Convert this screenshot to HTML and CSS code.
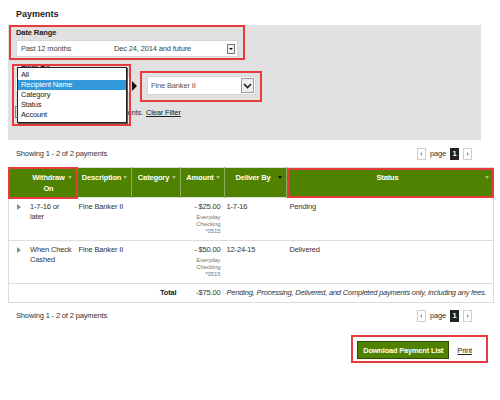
FILE: index.html
```html
<!DOCTYPE html>
<html>
<head>
<meta charset="utf-8">
<link rel="stylesheet" href="styles.css">
</head>
<body>
<div class="page">
  <h1 class="title">Payments</h1>
  <div class="panel">
    <div class="daterange mark">
      <div class="label">Date Range</div>
      <div class="select date-select">
        <span class="range">Past 12 months</span>
        <span class="range-text">Dec 24, 2014 and future</span>
        <span class="mini-btn"><i class="tri-down"></i></span>
      </div>
    </div>
    <div class="filter">
      <div class="filter-col">
        <div class="flabel">Filter By</div>
        <div class="select fsel">Recipient Name</div>
      </div>
      <span class="arrow"></span>
      <div class="mark valbox">
        <div class="select vsel">
          <span class="vtext">Fine Banker II</span>
          <span class="chev-btn"><svg width="9" height="6" viewBox="0 0 9 6"><polyline points="1,1 4.5,4.5 8,1" fill="none" stroke="#222" stroke-width="1.6"/></svg></span>
        </div>
      </div>
    </div>
    <div class="summary">
      <span class="focus-box"></span>
      <span class="count">Showing 2 of 2 payments.</span>
      <a class="link">Clear Filter</a>
    </div>
    <div class="list-mark">
      <ul class="listbox">
        <li>All</li>
        <li class="sel">Recipient Name</li>
        <li>Category</li>
        <li>Status</li>
        <li>Account</li>
      </ul>
    </div>
  </div>

  <div class="bar bar-top">
    <span>Showing 1 - 2 of 2 payments</span>
    <div class="pager">
      <span class="pg-btn"><i class="tri-l"></i></span>
      <span class="pg-word">page</span>
      <span class="pg-cur">1</span>
      <span class="pg-btn"><i class="tri-r"></i></span>
    </div>
  </div>

  <table class="pay">
    <colgroup>
      <col class="c1"><col class="c2"><col class="c3"><col class="c4"><col class="c5"><col class="c6">
    </colgroup>
    <thead>
      <tr class="head">
        <th class="th-withdraw"><div class="hd"><span class="lbl">Withdraw<br>On</span><i class="caret"></i></div></th>
        <th><div class="hd"><span class="lbl">Description</span><i class="caret"></i></div></th>
        <th><div class="hd"><span class="lbl">Category</span><i class="caret"></i></div></th>
        <th><div class="hd"><span class="lbl">Amount</span><i class="caret"></i></div></th>
        <th><div class="hd"><span class="lbl">Deliver By</span><i class="caret dark"></i></div></th>
        <th class="th-status"><div class="hd"><span class="lbl">Status</span><i class="caret"></i></div></th>
      </tr>
    </thead>
    <tbody>
      <tr>
        <td class="td-w"><div class="wcell"><i class="exp"></i><span class="wtext">1-7-16 or later</span></div></td>
        <td>Fine Banker II</td>
        <td></td>
        <td class="amt">- $25.00<div class="acct">Everyday<br>Checking<br>*0515</div></td>
        <td>1-7-16</td>
        <td class="st">Pending</td>
      </tr>
      <tr>
        <td class="td-w"><div class="wcell"><i class="exp"></i><span class="wtext">When Check Cashed</span></div></td>
        <td>Fine Banker II</td>
        <td></td>
        <td class="amt">- $50.00<div class="acct">Everyday<br>Checking<br>*0515</div></td>
        <td>12-24-15</td>
        <td class="st">Delivered</td>
      </tr>
      <tr class="total">
        <td></td>
        <td></td>
        <td class="tot-lbl">Total</td>
        <td class="amt">-$75.00</td>
        <td colspan="2" class="note">Pending, Processing, Delivered, and Completed payments only, including any fees.</td>
      </tr>
    </tbody>
  </table>

  <div class="bar bar-bottom">
    <span>Showing 1 - 2 of 2 payments</span>
    <div class="pager">
      <span class="pg-btn"><i class="tri-l"></i></span>
      <span class="pg-word">page</span>
      <span class="pg-cur">1</span>
      <span class="pg-btn"><i class="tri-r"></i></span>
    </div>
  </div>

  <div class="actions">
    <div class="mark actions-box">
      <button class="dl-btn">Download Payment List</button>
      <a class="link print">Print</a>
    </div>
  </div>
</div>
</body>
</html>
```

FILE: styles.css
```css
* { box-sizing: border-box; }
body {
  margin: 0;
  background: #fff;
  font-family: "Liberation Sans", Arial, sans-serif;
  font-size: 7.5px;
  letter-spacing: -0.15px;
  color: #333;
}
.page {
  width: 485px;
  margin-left: 8px;
  padding-top: 6px;
}
.title {
  margin: 0 0 4px 0;
  padding-left: 8px;
  font-size: 9px;
  letter-spacing: 0;
  line-height: 16px;
  font-weight: bold;
  color: #222;
}
.mark { border: 2px solid #e63c3f; }

/* panel */
.panel {
  position: relative;
  width: 473px;
  height: 115px;
  background: #e1e1e1;
}
.daterange {
  width: 236px;
  height: 35px;
  margin: -1px 0 0 1px;
  padding: 0 5px;
}
.label {
  font-weight: bold;
  font-size: 7.6px;
  line-height: 12px;
  color: #222;
}
.select {
  background: #fff;
  border: 1px solid #d6d6d6;
  display: flex;
  align-items: center;
}
.date-select {
  height: 17px;
  margin-top: 1px;
  padding-left: 4px;
  color: #444;
}
.range { width: 93px; }
.mini-btn {
  margin-left: auto;
  margin-right: 2px;
  width: 8px;
  height: 10px;
  border: 1px solid #777;
  background: #f0f0f0;
  display: flex;
  align-items: center;
  justify-content: center;
}
.tri-down {
  width: 0; height: 0;
  border-left: 2px solid transparent;
  border-right: 2px solid transparent;
  border-top: 2.5px solid #111;
}

.filter {
  display: flex;
  align-items: flex-start;
  margin-top: 1px;
}
.filter-col { margin-left: 7px; width: 115px; }
.flabel { line-height: 11px; padding-left: 6px; font-weight: bold; color: #222; }
.fsel { margin-top: 4px; height: 17px; padding-left: 5px; }
.arrow {
  margin: 20px 0 0 2px;
  width: 0; height: 0;
  border-left: 5px solid #111;
  border-top: 5px solid transparent;
  border-bottom: 5px solid transparent;
}
.valbox {
  margin: 10px 0 0 3px;
  width: 122px;
  height: 31px;
  padding: 3px 4px 0 5px;
}
.vsel { height: 19px; padding-left: 3px; color: #555; }
.chev-btn {
  margin-left: auto;
  margin-right: 1px;
  width: 13px;
  height: 15px;
  border: 1px solid #9a9a9a;
  background: #eee;
  display: flex;
  align-items: center;
  justify-content: center;
}
.summary {
  display: flex;
  align-items: center;
  margin-top: 4px;
  height: 12px;
}
.focus-box {
  margin-left: 7px;
  width: 22px;
  height: 12px;
  border: 1px solid #4a8fd8;
}
.count {
  width: 106px;
  text-align: right;
  white-space: nowrap;
  overflow: hidden;
  color: #333;
}
.link {
  margin-left: 3px;
  color: #222;
  text-decoration: underline;
}

/* dropdown overlay */
.list-mark {
  position: absolute;
  left: 4px;
  top: 39px;
  width: 119px;
  height: 62px;
  border: 2px solid #e63c3f;
  padding: 1px 2px 1px 3px;
}
.listbox {
  list-style: none;
  margin: 0;
  padding: 2px 0 0 0;
  height: 100%;
  background: #fff;
  border: 1px solid #222;
  box-shadow: 1px 1px 0 #555;
}
.listbox li {
  line-height: 10px;
  padding-left: 3px;
  color: #222;
}
.listbox li.sel { background: #3399db; color: #fff; }

/* bars */
.bar {
  display: flex;
  justify-content: space-between;
  align-items: center;
  height: 13px;
  padding: 0 21px 0 8px;
}
.bar-top { margin-top: 7px; }
.bar-bottom { margin-top: 6px; }
.pager { display: flex; align-items: center; }
.pg-btn {
  width: 9px;
  height: 12px;
  border: 1px solid #cfcfcf;
  background: #fff;
  display: flex;
  align-items: center;
  justify-content: center;
}
.tri-l, .tri-r { width: 0; height: 0; border-top: 2.5px solid transparent; border-bottom: 2.5px solid transparent; }
.tri-l { border-right: 2.5px solid #999; }
.tri-r { border-left: 2.5px solid #999; }
.pg-word { margin: 0 4px; color: #333; }
.pg-cur {
  width: 9px;
  height: 12px;
  background: #222;
  color: #fff;
  font-weight: bold;
  display: flex;
  align-items: center;
  justify-content: center;
  margin-right: 4px;
}

/* table */
.pay {
  margin-top: 7px;
  width: 485px;
  table-layout: fixed;
  border-collapse: collapse;
  border: 1px solid #dcdcdc;
}
.c1 { width: 68px; } .c2 { width: 55px; } .c3 { width: 49px; }
.c4 { width: 44px; } .c5 { width: 62px; } .c6 { width: 207px; }
.head { height: 30px; }
.pay th {
  background: #4f8200;
  color: #fff;
  font-weight: bold;
  font-size: 7.5px;
  line-height: 11px;
  vertical-align: top;
  padding: 4px 4px 0 3px;
  border-left: 1px solid #8fae63;
  text-align: center;
}
.pay th:first-child { border-left: none; }
.hd { display: flex; align-items: flex-start; }
.lbl { flex: 1; text-align: center; }
.caret {
  margin-top: 4px;
  width: 0; height: 0;
  border-left: 2.5px solid transparent;
  border-right: 2.5px solid transparent;
  border-top: 3px solid #a6c27a;
}
.caret.dark { border-top-color: #111; }
.pay th.th-withdraw { padding-left: 20px; outline: 2px solid #e63c3f; outline-offset: -1px; }
.pay th.th-status { outline: 2px solid #e63c3f; outline-offset: -2px; }

.pay td {
  vertical-align: top;
  line-height: 10px;
  padding: 4px 2px 5px 2px;
  border-top: 1px solid #dcdcdc;
  color: #333;
}
.pay td.td-w { padding-left: 8px; padding-right: 4px; }
.wcell { display: flex; align-items: flex-start; }
.exp {
  flex: none;
  margin: 1.5px 9px 0 0;
  width: 0; height: 0;
  border-left: 4px solid #8a8a8a;
  border-top: 3.5px solid transparent;
  border-bottom: 3.5px solid transparent;
}
.wtext { width: 43px; }
.pay td.amt { text-align: right; padding-right: 4px; }
.acct {
  margin-top: 2px;
  font-size: 6px;
  letter-spacing: -0.1px;
  line-height: 7px;
  color: #777;
}
.pay td.st { padding-left: 3px; }
.total td { padding: 4px 2px 4px 2px; }
.pay td.tot-lbl { text-align: right; font-weight: bold; padding-right: 4px; color: #222; }
.pay td.note { font-style: italic; white-space: nowrap; letter-spacing: -0.2px; }

/* actions */
.actions {
  display: flex;
  justify-content: flex-end;
  padding-right: 5px;
  margin-top: 13px;
}
.actions-box {
  display: flex;
  align-items: center;
  padding: 4px 14px 2px 4px;
  height: 28px;
}
.dl-btn {
  width: 92px;
  height: 18px;
  padding: 0;
  background: #4f8200;
  border: 1px solid #2e4a06;
  color: #fff;
  font-family: "Liberation Sans", Arial, sans-serif;
  font-weight: bold;
  font-size: 7.4px;
  letter-spacing: -0.15px;
}
.print { margin-left: 8px; }
```
